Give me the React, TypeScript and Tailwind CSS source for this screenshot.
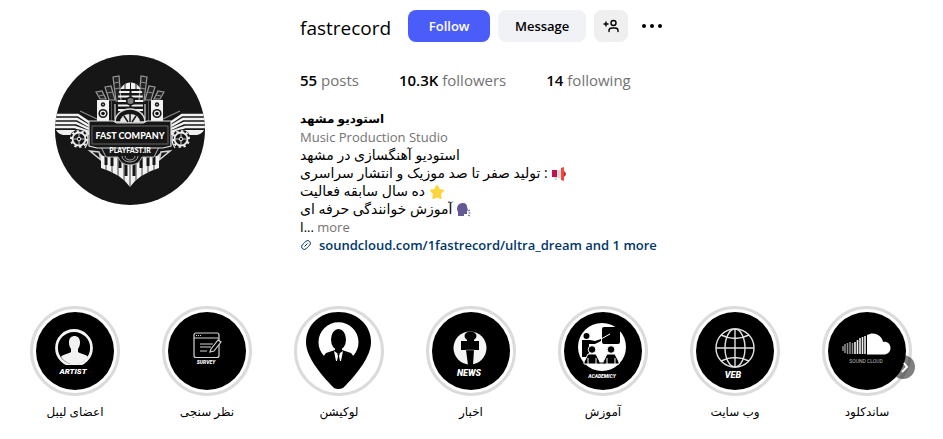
import type { ReactNode } from "react";

const stats = [
  { value: "55", label: "posts" },
  { value: "10.3K", label: "followers" },
  { value: "14", label: "following" },
];

function ProfileLogo() {
  return (
    <svg viewBox="0 0 150 150" className="h-full w-full" role="img" aria-label="fastrecord profile picture">
      <defs>
        <clipPath id="avatar">
          <circle cx="75" cy="75" r="75" />
        </clipPath>
        <clipPath id="mic">
          <path d="M63 44C63 22 88 22 88 44V66H63Z" />
        </clipPath>
        <clipPath id="keys">
          <path d="M46 101H104V113Q84 119 75 132Q66 119 46 113Z" />
        </clipPath>
      </defs>
      <g clipPath="url(#avatar)">
        <rect width="150" height="150" fill="#161616" />

        {[false, true].map((flip) => (
          <g key={String(flip)} transform={flip ? "translate(150 0) scale(-1 1)" : undefined}>
            {/* bars behind the speakers */}
            <g fill="#242424" stroke="#9a9a9a" strokeWidth="1.2">
              <path d="M41 37 47 36 51 44 45 44Z" />
              <path d="M50 32 56 31 60 45 54 45Z" />
              <path d="M58 22 64 21 66 46 61 46Z" />
            </g>
            <path d="M59 28 65 27M59 34 65 33M52 38 58 37M44 41 49 40" stroke="#8c8c8c" />

            {/* speaker */}
            <path d="M42 45h12v21H42Z" fill="#f2f2f2" />
            <circle cx="48" cy="49.5" r="2.2" fill="#161616" />
            <circle cx="48" cy="49.5" r=".8" fill="#ccc" />
            <circle cx="48" cy="58.5" r="4.6" fill="#161616" />
            <circle cx="48" cy="58.5" r="3" fill="#f2f2f2" />
            <circle cx="48" cy="58.5" r="1.8" fill="#161616" />
            <path d="M60 49v15" stroke="#cfcfcf" strokeWidth="1.2" />
            <path d="M56.5 46v20" stroke="#666" strokeWidth=".8" />

            {/* wing */}
            <g fill="none" stroke="#f2f2f2" strokeWidth="2.4">
              <path d="M0 60H23L35 68" />
              <path d="M0 64H22L34 71" />
              <path d="M0 68H21L34 74" />
              <path d="M0 72H20L34 77" />
            </g>
            <path d="M1 75H20L34 78V80H8Q3 79 1 75Z" fill="#f2f2f2" />
            <path d="M25 56 42 64" stroke="#8c8c8c" strokeWidth="1.2" />

            {/* gear */}
            <circle cx="24" cy="84" r="9.5" fill="#161616" />
            <circle cx="24" cy="84" r="6.5" fill="none" stroke="#ededed" strokeWidth="1.8" />
            <circle cx="24" cy="84" r="8" fill="none" stroke="#ededed" strokeWidth="2" strokeDasharray="2.3 2.7" />
            <path d="M24 78v12M18 84h12" stroke="#c5c5c5" />
            <circle cx="24" cy="84" r="1.8" fill="#161616" stroke="#eee" />
            <path d="M30 75q6 9 0 18" fill="none" stroke="#e5e5e5" strokeWidth="1.2" />

            {/* ornaments below the plate */}
            <path d="M35 96 44 97 46 105ZM44 98 51 105" fill="none" stroke="#d5d5d5" strokeWidth="1.5" />
          </g>
        ))}

        {/* microphone */}
        <g clipPath="url(#mic)">
          <rect x="62" y="26" width="27" height="8" fill="#f2f2f2" />
          <path d="M70 26v8M75.5 26v8M81 26v8" stroke="#161616" />
          <path d="M63 37H88M63 41.5H88M63 46H88M63 50.5H88M63 55H88M63 59.5H88" stroke="#f2f2f2" strokeWidth="2.2" />
          <path d="M75.5 35v30" stroke="#161616" strokeWidth="2" />
        </g>
        <circle cx="75.5" cy="46" r="3.8" fill="#7b7b7b" stroke="#161616" strokeWidth="1.5" />
        <path d="M60 67a15 13 0 0 1 30 0Z" fill="#161616" stroke="#dcdcdc" strokeWidth="1.5" />
        <path d="M65 67a10 8 0 0 1 20 0Z" fill="#e5e5e5" />
        <path d="M75 59v8M69 61l4 6M81 61l-4 6" stroke="#161616" strokeWidth="1.5" />

        {/* piano keys */}
        <g clipPath="url(#keys)">
          <rect x="46" y="100" width="58" height="33" fill="#f2f2f2" />
          <path d="M51 101v31M57 101v31M63 101v31M69 101v31M75 101v31M81 101v31M87 101v31M93 101v31M99 101v31" stroke="#161616" strokeWidth=".8" />
          <path d="M51 101v9M57 101v10M65 101v12M71 108v13M79 108v13M86 101v12M93 101v10M99 101v9" stroke="#161616" strokeWidth="3" />
        </g>

        {/* name plate */}
        <path d="M46 92H104L99 102H87Q84 110 75 110Q66 110 63 102H51Z" fill="#161616" stroke="#b8b8b8" />
        <path d="M67 101a8 6 0 0 0 16 0M70 101a5 4 0 0 0 10 0" fill="none" stroke="#aaa" />
        <path d="M34 66H58L62 68H88L92 66H116V91L108 93H42L34 91Z" fill="#161616" stroke="#e2e2e2" strokeWidth="1.2" />
        <rect x="37" y="71" width="76" height="18" fill="#161616" stroke="#666" />
        <text x="75" y="84" textAnchor="middle" className="fill-white font-['Lato',sans-serif] text-[9px] font-black">FAST COMPANY</text>
        <text x="75" y="98" textAnchor="middle" className="fill-white font-['Lato',sans-serif] text-[7px] font-black">PLAYFAST.IR</text>
      </g>
    </svg>
  );
}

function Disc({ children }: { children: ReactNode }) {
  return (
    <svg viewBox="0 0 78 78" className="h-full w-full" aria-hidden="true">
      <circle cx="39" cy="39" r="39" fill="#000" />
      {children}
    </svg>
  );
}

const captionClass = "fill-white font-['Roboto',sans-serif] italic font-black";

const highlights: { title: string; cover: ReactNode }[] = [
  {
    title: "اعضای لیبل",
    cover: (
      <Disc>
        <circle cx="38" cy="36" r="17.5" fill="none" stroke="#f2f2f2" strokeWidth="2.8" />
        <path d="M33 30c0-8 11-8 11 0 0 4-1 5-2 7v3c3 2 8 2 10 5a16 16 0 0 1-27 0c2-3 7-3 10-5v-3c-1-2-2-3-2-7Z" fill="#f2f2f2" />
        <path d="M27 53h22v12H25Z" fill="#000" />
        <text x="37" y="62" textAnchor="middle" className={`${captionClass} text-[8px]`}>ARTIST</text>
      </Disc>
    ),
  },
  {
    title: "نظر سنجی",
    cover: (
      <Disc>
        <g fill="none" stroke="#d4d4d4" strokeWidth="1.2">
          <rect x="26" y="21" width="25" height="24.5" rx="2" />
          <path d="M26 26h25M28 23.5h1M30 23.5h1M32 23.5h1M32 32h13M32 35h11M32 39h7" />
          <path d="m43 37 7-9 3 2-7 9-4 1Z" fill="#000" />
        </g>
        <text x="38" y="52" textAnchor="middle" className={`${captionClass} text-[5px]`}>SURVEY</text>
      </Disc>
    ),
  },
  {
    title: "لوکیشن",
    cover: (
      <svg viewBox="0 0 78 78" className="h-full w-full" aria-hidden="true">
        <path d="M38.5 0C20 0 6 13 6 30c0 14 13 31 28 46q4 2 9 0c15-15 28-32 28-46C71 13 57 0 38.5 0Z" fill="#000" />
        <path d="M24 44a20 20 0 1 1 29 0Z" fill="#fff" />
        <ellipse cx="38.5" cy="27.5" rx="7.5" ry="10.5" fill="#000" />
        <path d="M23 45 26 41 35 38V35H42V38L51 41 54 45Z" fill="#000" />
        <path d="m34 39 4.5 3L43 39l-2 10h-5Z" fill="#fff" />
        <path d="m37 41 1.5 1 1.500-1-1 3 1 5h-3l1-5Z" fill="#000" />
      </svg>
    ),
  },
  {
    title: "اخبار",
    cover: (
      <Disc>
        <circle cx="38" cy="36" r="16.5" fill="#f5f5f5" />
        <ellipse cx="38.5" cy="24" rx="6" ry="4.500" fill="#000" />
        <path d="M35 25h7v4h5v9h-5l-1 15h-5l-2-15h-5v-9h6Z" fill="#000" />
        <path d="M34 38h8" stroke="#aaa" strokeWidth=".6" />
        <text x="37" y="64" textAnchor="middle" className={`${captionClass} text-[9px]`}>NEWS</text>
      </Disc>
    ),
  },
  {
    title: "آموزش",
    cover: (
      <Disc>
        <circle cx="38" cy="35" r="24" fill="#fff" />
        <rect x="38" y="15" width="18" height="17" rx="2" fill="#000" />
        <path d="M37 27 46 22" stroke="#fff" />
        <circle cx="22.5" cy="24" r="3" fill="#000" />
        <path d="M18 28h8l5 1 6-2v2l-6 3h-6v13h-7Z" fill="#000" />
        {[28, 47].map((x) => (
          <g key={x} transform={`translate(${x} 0)`}>
            <path d="M-4 42H4L8 50V52H-8V50Z" stroke="#fff" />
            <circle cy="37.5" r="3.8" stroke="#fff" />
            <path d="M-4 46v6M4 46v6" stroke="#fff" />
          </g>
        ))}
        <path d="M34 51h7" stroke="#000" />
        <text x="38" y="66" textAnchor="middle" className={`${captionClass} text-[5px]`}>ACADEMICY</text>
      </Disc>
    ),
  },
  {
    title: "وب سایت",
    cover: (
      <Disc>
        <g fill="none" stroke="#e2e2e2" strokeWidth="1.4">
          <circle cx="39" cy="36" r="19" />
          <ellipse cx="39" cy="36" rx="10" ry="19" />
          <path d="M39 17v38M20 36h38M25 23q14 7 28 0M25 49q14-7 28 0" />
        </g>
        <text x="37" y="66" textAnchor="middle" className={`${captionClass} text-[9px]`}>VEB</text>
      </Disc>
    ),
  },
  {
    title: "ساندکلود",
    cover: (
      <Disc>
        <path d="M39 23c7-4 15 0 16 7 4-1 7.500 2 7.500 6s-3 6.500-7 6.500H39Z" fill="#fff" />
        <path d="M37 24v18M34.500 25v17M32 26v16M29.500 28v14M27 30v12" stroke="#f0f0f0" strokeWidth="1.600" />
        <path d="M24.500 31v11M22 30v12M19.500 31v11M17 32v9M15 34v5" stroke="#929292" strokeWidth="1.500" />
        <text x="38" y="51" textAnchor="middle" className="fill-[#bbb] font-['Roboto',sans-serif] text-[5px]">SOUND CLOUD</text>
      </Disc>
    ),
  },
];

function Megaphone() {
  return (
    <svg viewBox="0 0 16 16" className="inline h-4 w-4" aria-hidden="true">
      <path d="M5 5 11 3v10l-6-2Z" fill="#d9d9dd" />
      <path d="M3 11h3v3H4Z" fill="#d9d9dd" />
      <path d="M1 4h5v7H1Z" fill="#c3134e" />
      <path d="M10 2 13 1v14l-3-1Z" fill="#f0473f" />
      <path d="M13 5q4 3 0 6Z" fill="#b52c35" />
    </svg>
  );
}

function Star() {
  return (
    <svg viewBox="0 0 16 16" className="inline h-4 w-4" aria-hidden="true">
      <path d="m8 2 2 4 4 .6-3 3 .7 4.400L8 12l-3.700 2 .7-4.400-3-3L6 6Z" fill="#fcd53f" stroke="#fcd53f" strokeWidth="2" strokeLinejoin="round" />
    </svg>
  );
}

function SpeakingHead() {
  return (
    <svg viewBox="0 0 16 16" className="inline h-4 w-4" aria-hidden="true">
      <path d="M2 14V10C0 7 1 1 7 1c3 0 4 2 4 4l1 3-1 1v3H8v2Z" fill="#635994" />
      <path d="m12 9 2-1M12.500 11h2M12 13l2 1" stroke="#635994" />
    </svg>
  );
}

export default function App() {
  return (
    <main className="min-h-screen bg-white font-['Open_Sans','DejaVu_Sans',sans-serif] text-sm text-black">
      <header className="flex pt-2.5 pl-[55px]">
        <div className="mt-[45px] mr-[95px] h-[150px] w-[150px] shrink-0">
          <ProfileLogo />
        </div>

        <section className="min-w-0 flex-1">
          <div className="flex h-8 items-center">
            <h1 className="mr-[17px] pt-1 text-[19px] leading-6">fastrecord</h1>
            <div className="flex gap-2">
              <button className="h-8 w-[82px] rounded-lg bg-[#4a5df9] text-[13px] font-semibold text-white">Follow</button>
              <button className="h-8 w-[88px] rounded-lg bg-[#f0f2f5] text-[13px] font-semibold">Message</button>
              <button aria-label="Similar accounts" className="flex h-8 w-[34px] items-center justify-center rounded-lg bg-[#efefef]">
                <svg viewBox="0 0 16 16" className="h-4 w-4" fill="none" stroke="#000" strokeWidth="1.4" strokeLinecap="round">
                  <path d="M1 6h4M3 4v4" />
                  <circle cx="10.5" cy="5" r="2.5" />
                  <path d="M6 13.500v-1c0-2 1-2.500 3-2.500h3c2 0 3 .5 3 2.500v1" />
                </svg>
              </button>
              <button aria-label="Options" className="flex h-8 w-8 items-center justify-center">
                <svg viewBox="0 0 24 24" className="h-6 w-6">
                  <circle cx="4" cy="12" r="2" />
                  <circle cx="12" cy="12" r="2" />
                  <circle cx="20" cy="12" r="2" />
                </svg>
              </button>
            </div>
          </div>

          <ul className="mt-[26px] flex gap-10 text-[15px] leading-6">
            {stats.map((s) => (
              <li key={s.label} className="text-[#737373]">
                <span className="font-semibold text-black">{s.value}</span> {s.label}
              </li>
            ))}
          </ul>

          <div className="mt-[18px] leading-[18px]">
            <p dir="rtl" className="h-[18px] text-left text-[12px] font-bold">استودیو مشهد</p>
            <p className="h-[18px] text-[13px] text-[#737373]">Music Production Studio</p>
            <p dir="rtl" className="h-[18px] text-left">استودیو آهنگسازی در مشهد</p>
            <p dir="rtl" className="h-[18px] text-left"><Megaphone /> : تولید صفر تا صد موزیک و انتشار سراسری</p>
            <p dir="rtl" className="h-[18px] text-left"><Star /> ده سال سابقه فعالیت</p>
            <p dir="rtl" className="h-[18px] text-left"><SpeakingHead /> آموزش خوانندگی حرفه ای</p>
            <p className="h-[18px] text-[13px]">ا... <button className="text-[#737373]">more</button></p>
            <a href="#links" className="flex h-[18px] items-center gap-[7px] text-[13px] font-semibold text-[#00376b]">
              <svg viewBox="0 0 24 24" className="h-3 w-3" fill="none" stroke="currentColor" strokeWidth="2" strokeLinecap="round">
                <path d="m9.700 14.300 4.600-4.600M9 7.500l3-3.200a5.500 5.500 0 0 1 7.700 7.700L16.500 15M15 16.500l-3 3.200a5.500 5.500 0 0 1-7.700-7.700L7.500 9" />
              </svg>
              soundcloud.com/1fastrecord/ultra_dream and 1 more
            </a>
          </div>
        </section>
      </header>

      <section className="relative mt-[52px] pr-2.5 pl-[9px]">
        <ul className="grid grid-cols-7">
          {highlights.map((h) => (
            <li key={h.title}>
              <a href="#highlight" className="flex flex-col items-center">
                <span className="h-[90px] w-[90px] rounded-full border-3 border-[#dbdbdb] p-[3px]">{h.cover}</span>
                <span dir="rtl" className="mt-2 text-xs leading-4">{h.title}</span>
              </a>
            </li>
          ))}
        </ul>
        <button aria-label="Next" className="absolute top-[49px] right-7 h-6 w-6 rounded-full bg-black/50">
          <svg viewBox="0 0 24 24" className="h-6 w-6" fill="none" stroke="#fff" strokeWidth="2">
            <path d="m13 8 3 4-5 5" />
          </svg>
        </button>
      </section>
    </main>
  );
}
